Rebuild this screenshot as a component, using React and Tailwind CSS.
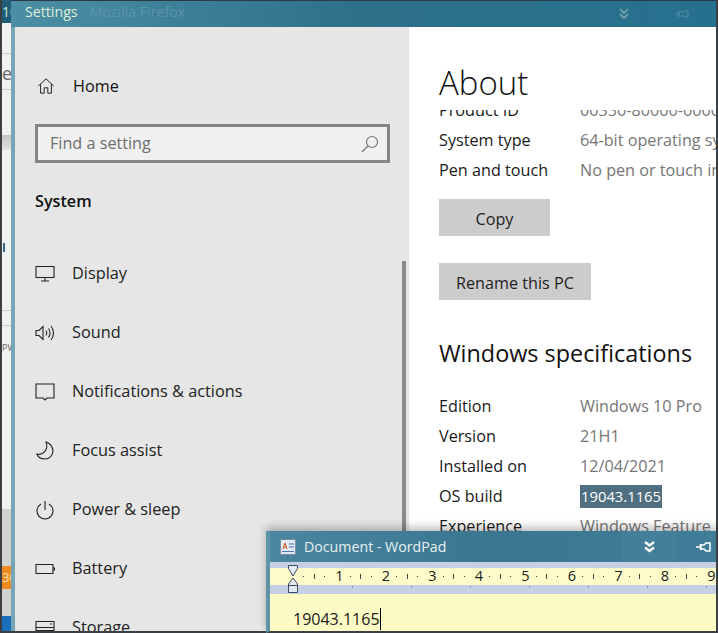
import React from "react";

const font = { fontFamily: '"Open Sans", "Noto Sans", sans-serif' };

const iconProps = {
  fill: "none",
  stroke: "#222",
  strokeWidth: 1.1,
  viewBox: "0 0 20 20",
  className: "w-5 h-5 shrink-0",
};

const HomeIcon = () => (
  <svg {...iconProps} className="ml-[2px] h-[18px] w-[18px] shrink-0">
    <path d="M1.500 10 10 2l8.500 8M4 8v10h4v-6h4v6h4V8" />
  </svg>
);
const DisplayIcon = () => (
  <svg {...iconProps}>
    <path d="M1 2.500h18v11H1zM10 13.500V17M6 17h8" />
  </svg>
);
const SoundIcon = () => (
  <svg {...iconProps}>
    <path d="M1 7.500v5h3l4 4v-13l-4 4zM11 7.500c1 1.500 1 3.500 0 5M13.500 5.500c2 2.500 2 6.500 0 9M16 3c3.300 4 3.300 10 0 14" />
  </svg>
);
const NotifIcon = () => (
  <svg {...iconProps}>
    <path d="M1 2h18v14h-7l-2 2-2-2H1z" />
  </svg>
);
const MoonIcon = () => (
  <svg {...iconProps}>
    <path d="M11 1c4 1 7 5 7 9 0 5-4 8-8 8-4 0-7-2-8-5 6 2 12-5 9-12z" />
  </svg>
);
const PowerIcon = () => (
  <svg {...iconProps}>
    <path d="M10 1v9M6 4a8 8 0 1 0 8 0" />
  </svg>
);
const BatteryIcon = () => (
  <svg {...iconProps}>
    <path d="M1 5.500h17v9H1zM18 9h1.500v2H18" />
  </svg>
);
const StorageIcon = () => (
  <svg {...iconProps}>
    <path d="M1 3.500h18v9H1zM1 9.500h18M15 6h2" />
  </svg>
);

const navItems = [
  ["Display", DisplayIcon],
  ["Sound", SoundIcon],
  ["Notifications & actions", NotifIcon],
  ["Focus assist", MoonIcon],
  ["Power & sleep", PowerIcon],
  ["Battery", BatteryIcon],
  ["Storage", StorageIcon],
];

const specs = [
  ["Edition", "Windows 10 Pro"],
  ["Version", "21H1"],
  ["Installed on", "12/04/2021"],
  ["OS build", "19043.1165"],
  ["Experience", "Windows Feature Experience Pack"],
];

function Row({ label, value, selected }) {
  return (
    <div className="flex h-[30px] items-center whitespace-nowrap text-[16.200px]">
      <span className="w-[141px] shrink-0 text-[#1a1a1a]">{label}</span>
      <span className={selected ? "bg-[#4f6f80] px-px text-[14.800px] leading-[23px] text-white" : "text-[#767676]"}>{value}</span>
    </div>
  );
}

function Ruler() {
  const nums = [1, 2, 3, 4, 5, 6, 7, 8, 9];
  const marks = [1, 2, 3, 4, 5, 6, 7];
  return (
    <div className="relative h-[32px] bg-[#c5d0e2]">
      <div className="absolute left-0 right-0 top-[6px] flex h-[17px] items-center overflow-hidden bg-[#fdfbc9] pl-[28px] text-[14.500px] text-[#222]">
        {nums.map((n) => (
          <div key={n} className="flex w-[46.500px] shrink-0 items-center justify-between pl-[5px]">
            <span className="h-[1px] w-[1px] bg-[#444]" />
            <span className="h-[5px] w-[1px] bg-[#444]" />
            <span className="h-[1px] w-[1px] bg-[#444]" />
            <span className="w-[10px] text-center leading-none">{n}</span>
          </div>
        ))}
      </div>
      <div className="absolute bottom-[6px] left-0 flex pl-[82px]">
        {marks.map((m) => (
          <span key={m} className="mr-[58px] h-[2px] w-[1px] bg-[#8894a8]" />
        ))}
      </div>
      <svg className="absolute left-[16px] top-[3px] h-[29px] w-[14px]" viewBox="0 0 14 29" fill="#e4e9f2" stroke="#3a4a60">
        <path d="M2.500 0.500h9v3L7 11 2.500 3.500zM7 13l4.500 6v1.500h-9V19zM2.500 20.500h9v7h-9z" />
      </svg>
    </div>
  );
}

export default function App() {
  return (
    <div className="relative flex h-[633px] w-[718px] overflow-hidden bg-white" style={font}>
      {/* window behind */}
      <div className="flex w-[11px] shrink-0 flex-col overflow-hidden border-b-2 border-l-2 border-[#3a3f44] bg-[#f1f1f1] text-[#666]">
        <div className="h-[23px] shrink-0 whitespace-nowrap bg-[#1f6078] text-[14px] leading-[23px] text-[#cfe6d0]">10</div>
        <div className="mt-[30px] h-px shrink-0 bg-[#ccc]" />
        <div className="h-[35px] shrink-0 text-[18px] leading-[38px]">e</div>
        <div className="h-px shrink-0 bg-[#ccc]" />
        <div className="mt-[45px] h-[15px] shrink-0 bg-gradient-to-b from-[#c4c4c4] to-[#e4e4e4]" />
        <div className="ml-[1px] mt-[93px] h-[9px] w-[2px] shrink-0 bg-[#3c6490]" />
        <div className="mt-[58px] h-px shrink-0 bg-[#ccc]" />
        <div className="mt-[14px] h-px shrink-0 bg-[#ccc]" />
        <div className="mt-[16px] h-[12px] shrink-0 whitespace-nowrap text-[9px] leading-[12px]">PW</div>
        <div className="mt-[155px] h-[57px] shrink-0 bg-[#d2d2d2]" />
        <div className="h-[23px] shrink-0 whitespace-nowrap bg-[#ee8a1f] text-[13px] leading-[23px] text-[#ffe0b0]">30</div>
        <div className="h-[27px] shrink-0 bg-[#d2d2d2]" />
        <div className="flex-1 bg-[#1a70b8]" />
      </div>

      {/* settings window */}
      <div className="flex min-w-0 flex-1 flex-col border-r-2 border-[#3a3f44]">
        <div className="flex h-[27px] shrink-0 items-start border-t border-[#2a3a48] bg-gradient-to-r from-[#4c8ea4] via-[#2d7088] to-[#26708f] pl-[14px] pt-[2px] text-[14.200px] leading-[18px]">
          <span className="text-[#dcefd6]">Settings</span>
          <span className="ml-[12px] text-[#5a95a8]">Mozilla Firefox</span>
          <svg className="ml-[434px] mt-[5px] h-[12px] w-[10px]" viewBox="0 0 10 12" fill="none" stroke="#6d9dab" strokeWidth="2">
            <path d="M1 1l4 4 4-4M1 6l4 4 4-4" />
          </svg>
          <svg className="ml-[46px] mt-[6px] h-[10px] w-[14px]" viewBox="0 0 14 10" fill="none" stroke="#4f8ca2" strokeWidth="1.200">
            <path d="M0 5h4M4 2v6M4 3h5l1-1h3v6h-3l-1-1H4" />
          </svg>
        </div>
        <div className="flex min-h-0 flex-1 border-b-2 border-[#3a3f44]">
          <div className="w-[4px] shrink-0 bg-[#76a5b8]" />
          <aside className="flex w-[394px] shrink-0 flex-col overflow-hidden bg-[#e6e6e6] pl-[20px] pr-[19px]">
            <div className="mt-[47px] flex h-[24px] shrink-0 items-center gap-[18px] text-[16.200px] text-[#111]">
              <HomeIcon />
              <span>Home</span>
            </div>
            <div className="mt-[26px] flex h-[39px] shrink-0 items-center justify-between border-[3px] border-[#858585] bg-[#f0f0f0] pl-[12px] pr-[8px] text-[16.200px] text-[#6e6e6e]">
              <span>Find a setting</span>
              <svg className="h-[18px] w-[18px]" viewBox="0 0 18 18" fill="none" stroke="#777" strokeWidth="1.200">
                <circle cx="11" cy="7" r="5.500" />
                <path d="M7 11l-6 6" />
              </svg>
            </div>
            <div className="mt-[26px] shrink-0 text-[16.200px] font-semibold leading-[24px] text-[#111]">System</div>
            <div className="relative mt-[31px] shrink-0">
              <nav className="flex flex-col">
                {navItems.map(([label, Icon]) => (
                  <div key={label} className="flex h-[59px] shrink-0 items-center gap-[17px] whitespace-nowrap text-[16.300px] text-[#222]">
                    <Icon />
                    <span>{label}</span>
                  </div>
                ))}
              </nav>
              <div className="absolute bottom-0 right-[-16px] top-[17px] w-[4px] bg-[#8a8a8a]" />
            </div>
          </aside>

          <main className="min-w-0 flex-1 overflow-hidden bg-white pl-[30px]">
            <h1 className="mt-[35px] h-[48px] text-[33px] font-light leading-[42px] text-[#111]">About</h1>
            <div className="h-[421px] overflow-hidden">
              <div className="-mt-[15px]">
                <Row label="Product ID" value="00330-80000-00000-AA000" />
                <Row label="System type" value="64-bit operating system" />
                <Row label="Pen and touch" value="No pen or touch input" />
                <button type="button" className="mt-[14px] block h-[37px] w-[111px] bg-[#cccccc] pt-[3px] text-[16.200px] text-[#222]">
                  Copy
                </button>
                <button type="button" className="mt-[27px] block h-[37px] w-[152px] bg-[#cccccc] pt-[3px] text-[16.200px] text-[#222]">
                  Rename this PC
                </button>
                <h2 className="mt-[35px] text-[23.400px] leading-[36px] text-[#111]">Windows specifications</h2>
                <div className="mt-[20px]">
                  {specs.map(([l, v]) => (
                    <Row key={l} label={l} value={v} selected={l === "OS build"} />
                  ))}
                </div>
              </div>
            </div>
          </main>
        </div>
      </div>

      {/* wordpad window */}
      <div className="absolute left-[266px] top-[531px] flex h-[102px] w-[452px] flex-col border-b-2 border-l-[4px] border-r-2 border-[#5f93a8] border-b-[#3a3f44] border-r-[#3a3f44] shadow-[0_-4px_8px_rgba(0,0,0,0.25)]">
        <div className="flex h-[31px] shrink-0 items-center bg-gradient-to-r from-[#4b86a0] via-[#3a7690] to-[#3f7d98] pl-[10px] text-[14.200px] text-[#e6f0f0]">
          <svg className="mr-[8px] h-[16px] w-[16px]" viewBox="0 0 16 16">
            <rect x="0.500" y="0.500" width="15" height="15" fill="#dfe8f3" stroke="#7a8ca0" />
            <path d="M3 10l2-6 2 6M3.700 8h2.600" fill="none" stroke="#c4561e" />
            <path d="M9 5h5M9 8h5M2 12.500h12" stroke="#4a78b0" />
          </svg>
          <span>Document - WordPad</span>
          <span className="ml-auto flex h-full w-[56px] items-center justify-center bg-[#447f99]">
            <svg className="h-[12px] w-[11px]" viewBox="0 0 11 12" fill="none" stroke="#fff" strokeWidth="2.400">
              <path d="M1 1l4.500 3.500L10 1M1 6.500l4.500 3.500L10 6.500" />
            </svg>
          </span>
          <svg className="ml-[19px] mr-[5px] h-[12px] w-[15px]" viewBox="0 0 15 12" fill="none" stroke="#fff" strokeWidth="1.500">
            <path d="M0 6h4M4.500 3v6M5 4h3l2-2h4v8h-4L8 8H5z" />
          </svg>
        </div>
        <Ruler />
        <div className="min-h-0 flex-1 overflow-hidden bg-[#fdfbc4] pl-[23px] pt-[14px] text-[16px] leading-[22px] text-[#222]">
          <span className="border-r border-black">19043.1165</span>
        </div>
      </div>
    </div>
  );
}
